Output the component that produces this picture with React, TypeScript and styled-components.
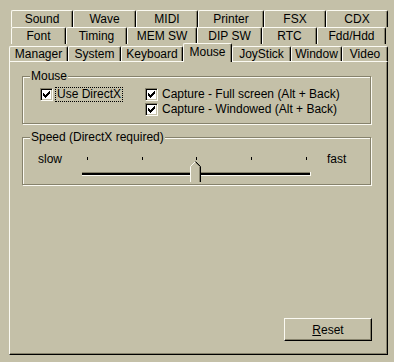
import React from "react";
import styled, { createGlobalStyle, css } from "styled-components";

const FACE = "#c4c0a8";
const LIGHT = "#fbfaf2";
const SHADOW = "#86826c";
const DARK = "#000000";

const GlobalStyle = createGlobalStyle`
  html, body {
    margin: 0;
    padding: 0;
    background: ${FACE};
  }
  body {
    font-family: "Liberation Sans", Arial, sans-serif;
    font-size: 12px;
    color: #000;
  }
`;

const Window = styled.div`
  width: 394px;
  height: 362px;
  box-sizing: border-box;
  padding: 10px 6px 7px 9px;
  display: flex;
  flex-direction: column;
  background: ${FACE};
`;

const TabRow = styled.div<{ $indent: number; $front?: boolean }>`
  display: flex;
  height: 17px;
  padding-left: ${({ $indent }) => $indent}px;
  position: relative;
  z-index: ${({ $front }) => ($front ? 2 : 0)};
`;

const Tab = styled.div<{ $w: number; $active?: boolean; $front?: boolean }>`
  width: ${({ $w }) => $w}px;
  box-sizing: border-box;
  border-top: 1px solid ${LIGHT};
  border-left: 1px solid ${LIGHT};
  border-right: 1px solid ${DARK};
  box-shadow: inset -1px 0 0 ${SHADOW};
  border-radius: 2px 2px 0 0;
  background: ${FACE};
  display: flex;
  align-items: center;
  justify-content: center;
  line-height: 13px;
  white-space: nowrap;
  ${({ $front, $active }) =>
    $front &&
    !$active &&
    css`
      margin-top: 2px;
      height: 15px;
    `}
  ${({ $active }) =>
    $active &&
    css`
      margin-top: -1px;
      height: 19px;
      padding-bottom: 2px;
    `}
`;

const Panel = styled.div`
  flex: 1;
  display: flex;
  flex-direction: column;
  box-sizing: border-box;
  border: 1px solid;
  border-color: ${LIGHT} ${DARK} ${DARK} ${LIGHT};
  box-shadow: inset -1px -1px 0 ${SHADOW};
  padding: 14px 0 13px 12px;
  background: ${FACE};
`;

const Group = styled.div<{ $h: number; $gap?: number }>`
  width: 349px;
  height: ${({ $h }) => $h}px;
  margin-top: ${({ $gap }) => $gap ?? 0}px;
  box-sizing: border-box;
  border: 1px solid ${SHADOW};
  box-shadow: inset 1px 1px 0 ${LIGHT}, 1px 1px 0 ${LIGHT};
`;

const Legend = styled.div`
  margin: -7px 0 0 7px;
  padding: 0 1px;
  width: fit-content;
  line-height: 13px;
  background: ${FACE};
`;

const CheckGrid = styled.div`
  display: grid;
  grid-template-columns: 105px 1fr;
  grid-auto-rows: 15px;
  margin-top: 4px;
  padding-left: 17px;
`;

const CheckItem = styled.label<{ $col: number }>`
  grid-column: ${({ $col }) => $col};
  display: flex;
  align-items: center;
  gap: 3px;
  height: 15px;
`;

const Box = styled.span`
  width: 13px;
  height: 13px;
  box-sizing: border-box;
  border: 1px solid;
  border-color: ${SHADOW} ${LIGHT} ${LIGHT} ${SHADOW};
  box-shadow: inset 1px 1px 0 ${DARK}, inset -1px -1px 0 ${FACE};
  background: #fff;
  display: flex;
  align-items: center;
  justify-content: center;
  flex-shrink: 0;
`;

const CheckText = styled.span<{ $focus?: boolean }>`
  padding: 0 1px;
  line-height: 13px;
  white-space: nowrap;
  outline: ${({ $focus }) => ($focus ? "1px dotted #000" : "none")};
`;

const SliderRow = styled.div`
  display: flex;
  align-items: flex-start;
  height: 30px;
  margin-top: 9px;
  padding-left: 15px;
`;

const SideLabel = styled.span<{ $w?: number; $ml?: number }>`
  width: ${({ $w }) => ($w ? `${$w}px` : "auto")};
  margin-left: ${({ $ml }) => $ml ?? 0}px;
  line-height: 13px;
`;

const Footer = styled.div`
  margin-top: auto;
  padding-left: 262px;
`;

const Button = styled.button`
  width: 88px;
  height: 23px;
  box-sizing: border-box;
  border: 1px solid;
  border-color: ${LIGHT} ${DARK} ${DARK} ${LIGHT};
  box-shadow: inset -1px -1px 0 ${SHADOW};
  background: ${FACE};
  font: inherit;
  color: #000;
  padding: 0;
  u {
    text-decoration: underline;
  }
`;

const Check = () => (
  <Box>
    <svg width="7" height="7" viewBox="0 0 7 7">
      <path d="M0 2h1v1h1v1h1V3h1V2h1V1h1V0h1v3H6v1H5v1H4v1H3v1H2V6H1V5H0z" fill="#000" />
    </svg>
  </Box>
);

const ticks = [11, 66, 120, 175, 230];

const Slider = () => (
  <svg width="242" height="30" viewBox="0 0 242 30">
    {ticks.map((x) => (
      <rect key={x} x={x} y={4} width={1} height={3} fill="#000" />
    ))}
    <rect x={6} y={19} width={228} height={1} fill={SHADOW} />
    <rect x={6} y={20} width={228} height={2} fill="#000" />
    <rect x={6} y={22} width={229} height={1} fill={LIGHT} />
    <rect x={234} y={19} width={1} height={4} fill={LIGHT} />
    <polygon points="114,13 119,8 124,13 124,29 114,29" fill={FACE} />
    <polyline points="114.5,29 114.5,13.5 119.5,8.5" fill="none" stroke={LIGHT} />
    <polyline points="119.5,8.5 124.5,13.5 124.5,29" fill="none" stroke="#000" />
    <polyline points="119.5,9.5 123.5,13.5 123.5,29" fill="none" stroke={SHADOW} />
  </svg>
);

const rows = [
  { indent: 2, tabs: [["Sound", 62], ["Wave", 63], ["MIDI", 62], ["Printer", 66], ["FSX", 62], ["CDX", 62]] },
  { indent: 2, tabs: [["Font", 55], ["Timing", 61], ["MEM SW", 70], ["DIP SW", 65], ["RTC", 55], ["Fdd/Hdd", 69]] },
  {
    indent: 0,
    front: true,
    tabs: [["Manager", 59], ["System", 53], ["Keyboard", 62], ["Mouse", 49], ["JoyStick", 59], ["Window", 51], ["Video", 46]],
  },
] as { indent: number; front?: boolean; tabs: [string, number][] }[];

export default function App() {
  return (
    <Window>
      <GlobalStyle />
      {rows.map((row, i) => (
        <TabRow key={i} $indent={row.indent} $front={row.front}>
          {row.tabs.map(([name, w]) => (
            <Tab key={name} $w={w} $front={row.front} $active={name === "Mouse"}>
              {name}
            </Tab>
          ))}
        </TabRow>
      ))}
      <Panel>
        <Group $h={48}>
          <Legend>Mouse</Legend>
          <CheckGrid>
            <CheckItem $col={1}>
              <Check />
              <CheckText $focus>Use DirectX</CheckText>
            </CheckItem>
            <CheckItem $col={2}>
              <Check />
              <CheckText>Capture - Full screen (Alt + Back)</CheckText>
            </CheckItem>
            <CheckItem $col={2}>
              <Check />
              <CheckText>Capture - Windowed (Alt + Back)</CheckText>
            </CheckItem>
          </CheckGrid>
        </Group>
        <Group $h={48} $gap={13}>
          <Legend>Speed (DirectX required)</Legend>
          <SliderRow>
            <SideLabel $w={38}>slow</SideLabel>
            <Slider />
            <SideLabel $ml={9}>fast</SideLabel>
          </SliderRow>
        </Group>
        <Footer>
          <Button>
            <u>R</u>eset
          </Button>
        </Footer>
      </Panel>
    </Window>
  );
}
